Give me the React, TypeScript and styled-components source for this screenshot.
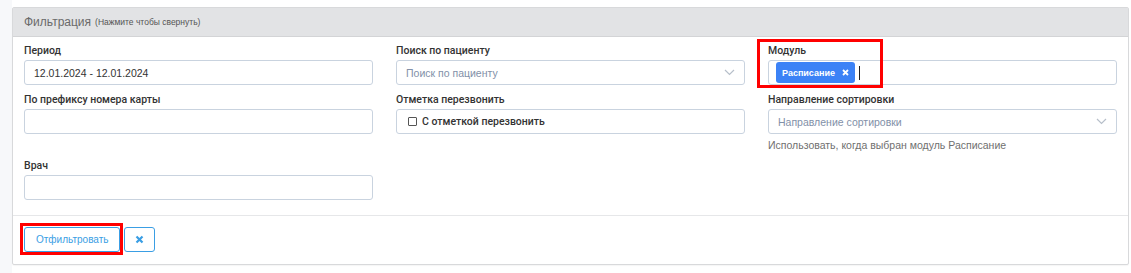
import React from 'react';
import styled, { createGlobalStyle } from 'styled-components';

const GlobalStyle = createGlobalStyle`
  html, body { margin: 0; padding: 0; }
  body {
    background: #fff;
    font-family: "Liberation Sans", Arial, sans-serif;
    color: #333;
  }
  #root { background: linear-gradient(90deg, #f7f8fa 0 12px, #fff 12px); padding: 7px 2px 8px 12px; }
`;

const Card = styled.div`
  border: 1px solid #d8d9db;
  border-radius: 2px;
  background: #fff;
  box-shadow: 0 1px 1px rgba(0, 0, 0, 0.04);
`;

const Header = styled.div`
  height: 28px;
  background: #e2e3e5;
  border-bottom: 1px solid #d3d4d6;
  display: flex;
  align-items: center;
  padding: 0 11px;
  color: #6a6a6a;
  font-size: 12px;
  cursor: pointer;
`;

const Hint = styled.small`
  font-size: 8.5px;
  margin-left: 4px;
  color: #555;
`;

const Body = styled.div`
  padding: 7px 11px 7px 11px;
  display: grid;
  grid-template-columns: repeat(3, 1fr);
  column-gap: 23px;
  align-items: start;
`;

const Group = styled.div`
  position: relative;
  margin-bottom: 8px;
`;

const Label = styled.div`
  font-family: Roboto, "Liberation Sans", sans-serif;
  font-size: 10.5px;
  font-weight: 500;
  color: #333;
  line-height: 14px;
  height: 14px;
  margin-bottom: 2px;
`;

const Field = styled.div<{ $muted?: boolean }>`
  height: 25px;
  box-sizing: border-box;
  border: 1px solid #c9d3df;
  border-radius: 3px;
  display: flex;
  align-items: center;
  padding: 0 9px;
  font-size: 10.5px;
  color: ${(p) => (p.$muted ? '#8290a8' : '#333')};
  background: #fff;
`;

const Chevron = styled.svg`
  margin-left: auto;
  flex: none;
`;

const Check = styled.span`
  width: 7px;
  height: 7px;
  border: 1px solid #555;
  border-radius: 1px;
  margin: 0 5px 0 2px;
  flex: none;
`;

const CheckText = styled.span`
  font-family: Roboto, "Liberation Sans", sans-serif;
  font-weight: 500;
  font-size: 10.5px;
  color: #333;
`;

const Tag = styled.span`
  background: #3c82f6;
  color: #fff;
  border-radius: 3px;
  height: 21px;
  display: inline-flex;
  align-items: center;
  padding: 0 6px;
  font-size: 9px;
  font-weight: 700;
  gap: 7px;
  margin-left: -2px;
`;

const Caret = styled.span`
  width: 1px;
  height: 14px;
  background: #222;
  margin-left: 4px;
`;

const HelpText = styled.div`
  font-size: 10.5px;
  color: #6f6f6f;
  margin-top: 5px;
  line-height: 12px;
`;

const Marker = styled.div`
  position: absolute;
  left: -11px;
  top: -5px;
  width: 120px;
  height: 43px;
  border: 3px solid #f00;
  pointer-events: none;
`;

const Footer = styled.div`
  border-top: 1px solid #e6e7e9;
  padding: 11px 11px 12px;
  display: flex;
  gap: 4px;
`;

const Button = styled.button<{ $marked?: boolean }>`
  position: relative;
  height: 25px;
  box-sizing: border-box;
  border: 1px solid #3a9ee4;
  border-radius: 3px;
  background: #fff;
  color: #3a9ee4;
  font-family: "Liberation Sans", Arial, sans-serif;
  font-size: 10px;
  padding: 0 11px;
  display: flex;
  align-items: center;
  justify-content: center;

  &::after {
    content: "";
    display: ${(p) => (p.$marked ? 'block' : 'none')};
    position: absolute;
    inset: -5px -4px -4px -5px;
    border: 3px solid #f00;
  }
`;

const IconButton = styled(Button)`
  width: 31px;
  padding: 0;
`;

const ChevronIcon = () => (
  <Chevron width="11" height="7" viewBox="0 0 11 7">
    <path d="M1 1l4.5 4.5L10 1" fill="none" stroke="#b7bfca" strokeWidth="1.2" />
  </Chevron>
);

export default function App() {
  return (
    <>
      <GlobalStyle />
      <Card>
        <Header>
          Фильтрация <Hint>(Нажмите чтобы свернуть)</Hint>
        </Header>
        <Body>
          <Group>
            <Label>Период</Label>
            <Field>12.01.2024 - 12.01.2024</Field>
          </Group>
          <Group>
            <Label>Поиск по пациенту</Label>
            <Field $muted>
              Поиск по пациенту
              <ChevronIcon />
            </Field>
          </Group>
          <Group>
            <Marker />
            <Label>Модуль</Label>
            <Field>
              <Tag>
                Расписание
                <svg width="7" height="7" viewBox="0 0 7 7">
                  <path d="M1 1l5 5M6 1L1 6" stroke="#fff" strokeWidth="1.8" />
                </svg>
              </Tag>
              <Caret />
            </Field>
          </Group>
          <Group>
            <Label>По префиксу номера карты</Label>
            <Field />
          </Group>
          <Group>
            <Label>Отметка перезвонить</Label>
            <Field>
              <Check />
              <CheckText>С отметкой перезвонить</CheckText>
            </Field>
          </Group>
          <Group>
            <Label>Направление сортировки</Label>
            <Field $muted>
              Направление сортировки
              <ChevronIcon />
            </Field>
            <HelpText>Использовать, когда выбран модуль Расписание</HelpText>
          </Group>
          <Group>
            <Label>Врач</Label>
            <Field />
          </Group>
        </Body>
        <Footer>
          <Button $marked>Отфильтровать</Button>
          <IconButton aria-label="Сбросить">
            <svg width="9" height="9" viewBox="0 0 9 9">
              <path d="M1.5 1.5l6 6M7.5 1.5l-6 6" stroke="#3a9ee4" strokeWidth="2.2" />
            </svg>
          </IconButton>
        </Footer>
      </Card>
    </>
  );
}
